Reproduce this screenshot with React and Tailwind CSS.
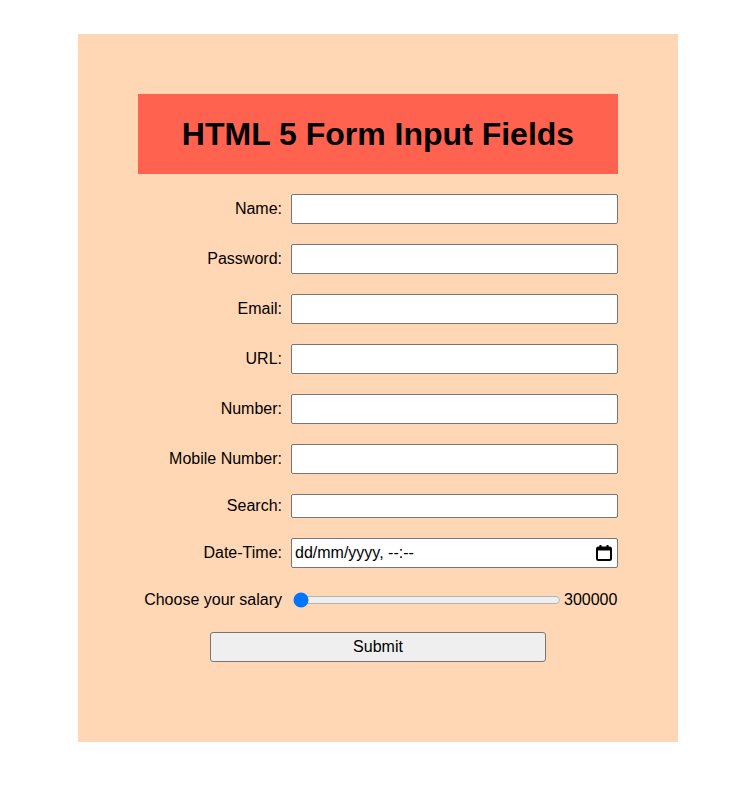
import React from "react";

const fields = [
  { label: "Name:", type: "text" },
  { label: "Password:", type: "password" },
  { label: "Email:", type: "email" },
  { label: "URL:", type: "url" },
  { label: "Number:", type: "number" },
  { label: "Mobile Number:", type: "tel" },
];

const inputClass =
  "w-[327px] h-[30px] bg-white border border-[#767676] rounded-[2px] px-[2px] text-[16px] outline-none";

const App = () => {
  return (
    <div className="min-h-screen bg-white font-['Liberation_Sans',Arial,sans-serif] text-black pt-[34px] pl-[78px] pb-[57px]">
      <div className="w-[600px] h-[708px] bg-[#ffd7b5] px-[60px] pt-[60px]">
        <h1 className="h-[80px] bg-[#ff6350] flex items-center justify-center text-[32px] font-bold">
          HTML 5 Form Input Fields
        </h1>

        <form className="mt-[20px] flex flex-col gap-[20px]">
          {fields.map((f) => (
            <div key={f.label} className="flex items-center gap-[9px]">
              <label className="w-[144px] text-right text-[16px]">{f.label}</label>
              <input type={f.type} className={inputClass} />
            </div>
          ))}

          <div className="flex items-center gap-[9px]">
            <label className="w-[144px] text-right text-[16px]">Search:</label>
            <input
              type="text"
              className="w-[327px] h-[24px] bg-white border border-[#767676] rounded-[2px] px-[2px] text-[16px] outline-none"
            />
          </div>

          <div className="flex items-center gap-[9px]">
            <label className="w-[144px] text-right text-[16px]">Date-Time:</label>
            <div className="w-[327px] h-[30px] bg-white border border-[#767676] rounded-[2px] flex items-center justify-between pl-[3px] pr-[4px] text-[16px]">
              <span>dd/mm/yyyy, --:--</span>
              <svg width="18" height="18" viewBox="0 0 18 18" fill="none">
                <rect x="2" y="3.5" width="14" height="12.5" rx="1.5" stroke="black" strokeWidth="2" />
                <rect x="2" y="3.5" width="14" height="3" fill="black" />
                <rect x="4.5" y="1" width="2" height="3" fill="black" />
                <rect x="11.5" y="1" width="2" height="3" fill="black" />
              </svg>
            </div>
          </div>

          <div className="flex items-center gap-[9px] h-[24px]">
            <label className="w-[144px] text-right text-[16px]">Choose your salary</label>
            <div className="w-[327px] flex items-center">
              <input
                type="range"
                min="300000"
                max="1000000"
                defaultValue="300000"
                className="ml-[2px] w-[268px] accent-[#0075ff]"
              />
              <span className="text-[16px] ml-[3px]">300000</span>
            </div>
          </div>

          <div className="flex justify-center">
            <button
              type="button"
              className="w-[336px] h-[30px] bg-[#efefef] border border-[#767676] rounded-[3px] text-[16px]"
            >
              Submit
            </button>
          </div>
        </form>
      </div>
    </div>
  );
};

export default App;
